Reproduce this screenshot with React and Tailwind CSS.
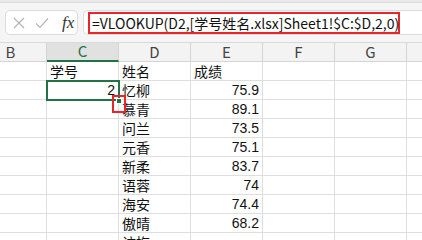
import React from "react";

const cols = ["B", "C", "D", "E", "F", "G", "H"];
const rows = [
  ["", "学号", "姓名", "成绩"],
  ["", "2", "忆柳", "75.9"],
  ["", "", "慕青", "89.1"],
  ["", "", "问兰", "73.5"],
  ["", "", "元香", "75.1"],
  ["", "", "新柔", "83.7"],
  ["", "", "语蓉", "74"],
  ["", "", "海安", "74.4"],
  ["", "", "傲晴", "68.2"],
  ["", "", "访梅", ""],
];

const font = { fontFamily: '"Noto Sans CJK SC", "Liberation Sans", sans-serif' };

export default function App() {
  return (
    <div className="relative w-[422px] h-[240px] overflow-hidden bg-white" style={font}>
      <div className="h-[3px] bg-[#e9e9e9] border-b border-[#dadada]" />
      <div className="h-[40px] bg-[#f5f5f5] border-b border-[#d9d9d9] flex items-start pt-[7px] pl-[5px] gap-[5px]">
        <div className="w-[73px] h-[25px] rounded-[5px] border border-[#dcdcdc] bg-white flex items-center pl-[6px]">
          <svg width="12" height="12" viewBox="0 0 12 12" className="ml-[1px]">
            <path d="M1 1 L11 11 M11 1 L1 11" stroke="#b5b5b5" strokeWidth="1.2" fill="none" />
          </svg>
          <svg width="14" height="12" viewBox="0 0 14 12" className="ml-[10px]">
            <path d="M1 6.5 L5 10.5 L13 1.5" stroke="#b5b5b5" strokeWidth="1.2" fill="none" />
          </svg>
          <span className="ml-[13px] text-[17px] leading-none italic text-[#333]" style={{ fontFamily: '"Liberation Serif", serif' }}>
            fx
          </span>
        </div>
        <div className="flex-1 h-[25px] rounded-l-[5px] border border-r-0 border-[#dcdcdc] bg-white flex items-center pl-[4px]">
          <div className="w-[312px] h-[22px] border-2 border-[#e8262a] flex items-center pl-[2px] text-[14px] leading-none text-[#111] whitespace-nowrap">
            =VLOOKUP(D2,[学号姓名.xlsx]Sheet1!$C:$D,2,0)
          </div>
        </div>
      </div>
      <div className="-ml-[25px]">
        <div className="flex h-[19px]">
          {cols.map((c) => (
            <div
              key={c}
              className={
                c === "C"
                  ? "w-[72px] shrink-0 flex items-center justify-center text-[15px] bg-[#e1e1e1] text-[#217346] border-r border-[#d4d4d4] border-b-2 border-b-[#217346]"
                  : "w-[72px] shrink-0 flex items-center justify-center text-[15px] bg-[#f3f3f3] text-[#444] border-r border-b border-[#d4d4d4]"
              }
            >
              {c}
            </div>
          ))}
        </div>
        {rows.map((r, i) => (
          <div key={i} className="flex h-[19px]">
            {cols.map((c, j) => {
              const v = r[j] || "";
              const isNum = /^[0-9.]+$/.test(v);
              return (
                <div
                  key={c}
                  className={
                    "w-[72px] shrink-0 border-r border-b border-[#dedede] flex items-center text-[14px] leading-none text-[#111] px-[3px] " +
                    (isNum ? "justify-end" : "justify-start")
                  }
                  style={isNum ? { fontFamily: '"Liberation Sans", sans-serif' } : undefined}
                >
                  {v}
                </div>
              );
            })}
          </div>
        ))}
      </div>
      <div className="absolute left-[46px] top-[80px] w-[74px] h-[21px] border-2 border-[#217346]" />
      <div className="absolute left-[116px] top-[98px] w-[6px] h-[6px] bg-[#217346] border border-white" />
      <div className="absolute left-[112px] top-[95px] w-[14px] h-[18px] border-2 border-[#e8262a]" />
    </div>
  );
}
